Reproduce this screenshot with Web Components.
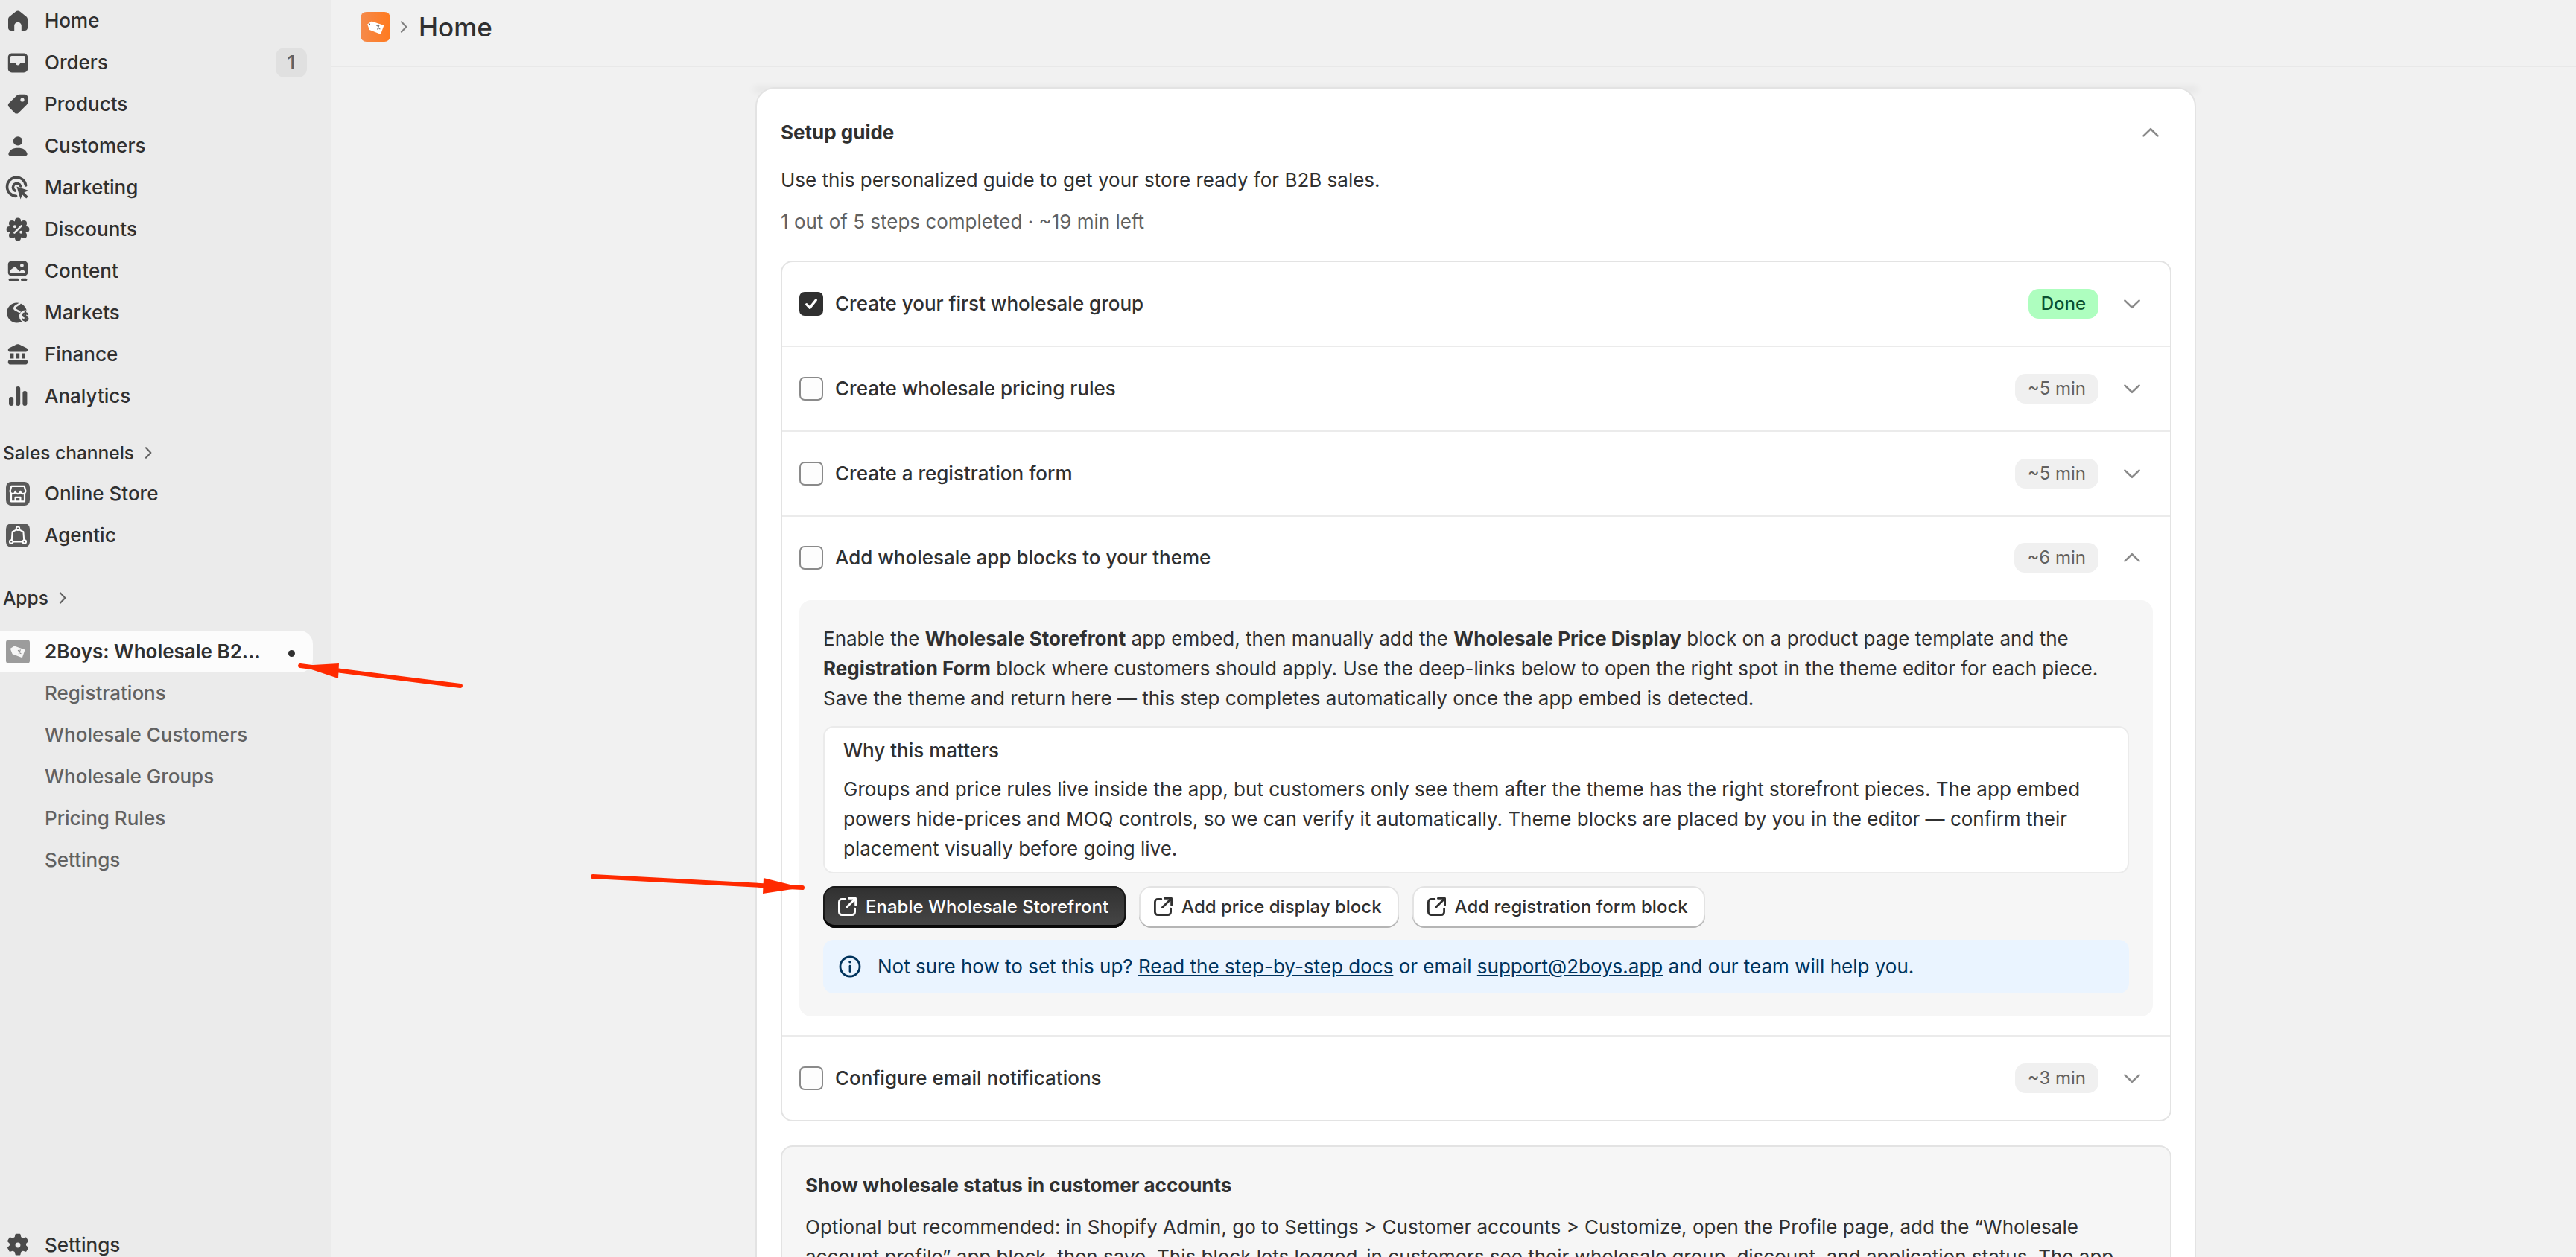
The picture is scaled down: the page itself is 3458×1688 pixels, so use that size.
<!DOCTYPE html>
<html lang="en">
<head>
<meta charset="utf-8">
<title>Home</title>
<style>
    html, body {
        margin: 0;
        height: 100%;
        overflow: hidden;
        background: #f1f1f1;
        font-family: Inter, "Liberation Sans", sans-serif;
        font-size: 26px;
        line-height: 40px;
        color: #303030;
    }
</style>
</head>
<body>
<admin-shell>
    <nav-sidebar slot="nav"></nav-sidebar>
    <top-bar slot="top">Home</top-bar>

    <setup-card>
        <step-row done time="Done">Create your first wholesale group</step-row>
        <step-row time="~5 min">Create wholesale pricing rules</step-row>
        <step-row time="~5 min">Create a registration form</step-row>
        <step-row time="~6 min" open>
            Add wholesale app blocks to your theme
            <theme-steps slot="body"></theme-steps>
        </step-row>
        <step-row time="~3 min">Configure email notifications</step-row>
    </setup-card>

    <red-arrow slot="over" tail="618,921" tip="403,894" wing-a="455,891" wing-b="454,911"></red-arrow>
    <red-arrow slot="over" tail="796,1177" tip="1077,1192" wing-a="1025,1179" wing-b="1024,1200"></red-arrow>
</admin-shell>

<script>
(function () {
    const ICONS = {
        home: '<path d="M10 3.2c-.5 0-1 .2-1.4.5L4.4 7.1c-.6.5-.9 1.2-.9 1.9v5.6c0 1 .8 1.9 1.9 1.9h2.2v-3.2c0-1.3 1.1-2.4 2.4-2.4s2.4 1.1 2.4 2.4v3.2h2.2c1.1 0 1.9-.9 1.9-1.9V9c0-.7-.3-1.4-.9-1.9l-4.2-3.4c-.4-.3-.9-.5-1.4-.5z"/>',
        orders: '<path fill-rule="evenodd" d="M6 3.8h8c1.4 0 2.5 1.1 2.6 2.5v7.8c0 1.4-1.2 2.6-2.6 2.6H6c-1.4 0-2.6-1.2-2.6-2.6V6.300c.1-1.400 1.200-2.500 2.600-2.500zM5.800 5.500c-.5 0-.8.4-.8.8v3.700h2.600c.5 0 .9.300 1 .7.300.6.800 1 1.400 1s1.100-.4 1.400-1c.1-.4.500-.7 1-.7H15V6.300c0-.4-.3-.8-.8-.8H5.800z"/>',
        tag: '<path fill-rule="evenodd" d="M11.300 3.400h3.400c1 0 1.900.9 1.900 1.900v3.500c0 .5-.2 1-.6 1.400l-5.500 5.500c-.8.8-2 .8-2.700 0l-3.800-3.800c-.8-.8-.8-2 0-2.700l5.500-5.300c.5-.3 1.200-.5 1.800-.5zM13 8.300a1.300 1.300 0 1 0 0-2.600 1.300 1.300 0 0 0 0 2.600z"/>',
        person: '<circle cx="10" cy="6.700" r="3.100"/><path d="M10 11.300c-3.400 0-5.800 1.800-6.300 4-.2.700.4 1.300 1.100 1.300h10.400c.7 0 1.300-.6 1.100-1.300-.5-2.200-2.900-4-6.300-4z"/>',
        marketing: '<path fill="none" stroke="currentColor" stroke-width="1.800" stroke-linecap="round" d="M8.800 15.700a6.300 6.300 0 1 1 6.500-7.200"/><path fill="none" stroke="currentColor" stroke-width="1.800" stroke-linecap="round" d="M8 12a2.600 2.600 0 1 1 3.800-3"/><path d="M9.200 9.300l8 2.700-3 1.300 2.700 2.700-1.300 1.300-2.700-2.700-1.100 3.100z"/>',
        discount: '<circle cx="10" cy="10" r="5.800"/><circle cx="10" cy="4.300" r="2"/><circle cx="10" cy="15.700" r="2"/><circle cx="4.300" cy="10" r="2"/><circle cx="15.700" cy="10" r="2"/><circle cx="6" cy="6" r="2"/><circle cx="14" cy="6" r="2"/><circle cx="6" cy="14" r="2"/><circle cx="14" cy="14" r="2"/><path stroke="#ebebeb" stroke-width="1.300" stroke-linecap="round" d="M7.700 12.300l4.600-4.600"/><circle cx="7.900" cy="8.100" r="1" fill="#ebebeb"/><circle cx="12.100" cy="11.900" r="1" fill="#ebebeb"/>',
        content: '<path fill-rule="evenodd" d="M5.500 3.400h9c1.200 0 2.100.9 2.100 2.100v5.500c0 1.200-.9 2.100-2.100 2.100h-9c-1.200 0-2.100-.9-2.100-2.100V5.500c0-1.200.9-2.100 2.100-2.100zM5 9.200v1.800c0 .3.200.5.500.5h9c.3 0 .5-.2.500-.5v-.5l-1.300-1.200c-.4-.3-.9-.3-1.300 0l-1.200.9-2.600-2.700c-.4-.3-.9-.3-1.300 0L5 9.200zM12.700 7.400a1.200 1.200 0 1 0 0-2.400 1.200 1.200 0 0 0 0 2.400z"/><rect x="3.800" y="14.900" width="7" height="1.700" rx=".8"/><rect x="12" y="14.900" width="4.200" height="1.700" rx=".8"/>',
        markets: '<circle cx="9.300" cy="10" r="6.700"/><path fill="none" stroke="#ebebeb" stroke-width="1.400" d="M11.500 3.200c-.8 2-3.400 1.700-3.800 3.500-.3 1.700 2.800 1.400 3.800 3.200"/><circle cx="15" cy="12.400" r="4.100" fill="#ebebeb"/><path fill="none" stroke="currentColor" stroke-width="1.300" stroke-linecap="round" d="M16.500 10.900c-.6-.8-3-.9-3 .6 0 1.500 3.100 1 3.100 2.500 0 1.500-2.500 1.400-3.300.5M15 9.500v6.300"/>',
        finance: '<path fill-rule="evenodd" d="M10 3.100c.3 0 .6.100.9.200l4.800 2.300c.6.300.9.800.9 1.400 0 .7-.5 1.200-1.200 1.200H4.600c-.7 0-1.200-.5-1.200-1.200 0-.6.300-1.100.9-1.400l4.800-2.300c.3-.1.600-.2.900-.2zM5 9.300h2.200v3.400H5zM8.900 9.300h2.200v3.400H8.900zM12.800 9.300H15v3.400h-2.200z"/><path d="M4.700 13.600h10.600c.7 0 1.300.6 1.300 1.300v.5c0 .7-.6 1.300-1.300 1.300H4.700c-.7 0-1.300-.6-1.300-1.300v-.5c0-.7.6-1.300 1.300-1.300z"/>',
        analytics: '<rect x="4" y="10.500" width="3.100" height="6" rx="1.500"/><rect x="8.600" y="3.500" width="3" height="13" rx="1.500"/><rect x="13.200" y="6.500" width="3" height="10" rx="1.500"/>',
        store: '<rect x="2" y="2" width="16" height="16" rx="3.600" fill="#5a5a5a"/><g fill="none" stroke="#fff" stroke-width="1.100" stroke-linejoin="round"><path d="M4.800 8.200 5.700 4.900h8.600l.9 3.300a1.700 1.700 0 0 1-3.500.2 1.700 1.700 0 0 1-3.400 0 1.700 1.700 0 0 1-3.500-.2z"/><path d="M5.500 10.200v5h9v-5"/><path d="M8.300 15.200v-2.800h3.400v2.800"/></g>',
        agentic: '<rect x="2" y="2" width="16" height="16" rx="3.600" fill="#5a5a5a"/><g fill="none" stroke="#fff" stroke-width="1" stroke-linejoin="round"><circle cx="10" cy="5.400" r="1.100"/><circle cx="5.600" cy="14.200" r="1.100"/><circle cx="14.400" cy="14.200" r="1.100"/><path d="M8.900 6.300 6.300 7.600l-.4 5.500M11.100 6.300l2.600 1.300.4 5.500M6.700 14.200h6.600"/></g>',
        settings: '<path fill-rule="evenodd" d="M8.700 2.800h2.600l.5 2 1.500.9 2-.6 1.300 2.200-1.500 1.500v1.500l1.500 1.500-1.300 2.200-2-.6-1.500.9-.5 2H8.700l-.5-2-1.500-.9-2 .6-1.300-2.200 1.500-1.500V8.800L3.400 7.300l1.300-2.200 2 .6 1.500-.9.500-2zM10 12.100a2.100 2.100 0 1 0 0-4.200 2.100 2.100 0 0 0 0 4.200z" stroke="currentColor" stroke-width=".8" stroke-linejoin="round"/>',
        app: '<rect x="2" y="2" width="16" height="16" rx="2" fill="#9c9c9c"/><path fill="#f6f6f6" d="M4.900 8 7.600 6.300l7.200 2.500-1.900 5.300-6.600-2.500z"/><path stroke="#8a8a8a" stroke-width=".6" fill="none" d="M11.700 8.700l-1.100 3M10 9.200l.8.400M11.400 11l.8.400"/>',
        external: '<path fill="none" stroke="currentColor" stroke-width="1.400" stroke-linecap="round" stroke-linejoin="round" d="M8.900 4.700H6.600c-1 0-1.900.8-1.900 1.900v6.800c0 1 .9 1.900 1.900 1.900h6.800c1 0 1.900-.9 1.900-1.900v-2.300M11.200 4.200h4.600v4.600M15.500 4.500l-5.800 5.800"/>',
        info: '<circle cx="10" cy="10" r="6.500" fill="none" stroke="currentColor" stroke-width="1.400"/><circle cx="10" cy="6.900" r=".9"/><path stroke="currentColor" stroke-width="1.400" stroke-linecap="round" d="M10 9.600v3.700"/>',
        down: '<path fill="none" stroke="currentColor" stroke-width="1.300" stroke-linecap="round" stroke-linejoin="round" d="M5.200 7.800 10 12.400l4.800-4.600"/>',
        up: '<path fill="none" stroke="currentColor" stroke-width="1.300" stroke-linecap="round" stroke-linejoin="round" d="M5.200 12.200 10 7.600l4.800 4.600"/>',
        right: '<path fill="none" stroke="currentColor" stroke-width="1.500" stroke-linecap="round" stroke-linejoin="round" d="M7.800 5.200 12.400 10l-4.600 4.800"/>'
    };

    class UiIcon extends HTMLElement {
        connectedCallback() {
            const size = this.getAttribute('size') || '40';
            this.attachShadow({ mode: 'open' }).innerHTML = `
                <style>
                    :host { display: inline-flex; flex: none; width: ${size}px; height: ${size}px; }
                    svg { display: block; width: 100%; height: 100%; fill: currentColor; }
                </style>
                <svg viewBox="0 0 20 20" aria-hidden="true">${ICONS[this.getAttribute('name')] || ''}</svg>`;
        }
    }

    class AdminShell extends HTMLElement {
        constructor() {
            super();
            this.attachShadow({ mode: 'open' }).innerHTML = `
                <style>
                    :host {
                        display: grid;
                        grid-template-columns: 444px 1fr;
                        position: relative;
                        width: 3458px;
                        height: 1688px;
                        overflow: hidden;
                    }
                    .main { display: flex; flex-direction: column; min-width: 0; }
                    .page { padding: 27px 0 0 570px; }
                    .page-inner { width: 1934px; }
                    .prior {
                        height: 0;
                        margin-top: -27px;
                        margin-bottom: 27px;
                        box-shadow: 0 3px 10px 2px rgba(0, 0, 0, 0.1);
                    }
                    .over { position: absolute; inset: 0; pointer-events: none; }
                </style>
                <slot name="nav"></slot>
                <div class="main">
                    <slot name="top"></slot>
                    <div class="page">
                        <div class="page-inner">
                            <div class="prior"></div>
                            <slot></slot>
                        </div>
                    </div>
                </div>
                <div class="over"><slot name="over"></slot></div>`;
        }
    }

    class NavItem extends HTMLElement {
        connectedCallback() {
            const icon = this.getAttribute('icon');
            const badge = this.getAttribute('badge');
            const dot = this.hasAttribute('dot');
            this.attachShadow({ mode: 'open' }).innerHTML = `
                <style>
                    :host {
                        display: flex;
                        align-items: center;
                        height: 56px;
                        padding-left: 4px;
                        font-weight: 500;
                        color: #303030;
                        white-space: nowrap;
                    }
                    :host([sub]) { padding-left: 60px; font-weight: 450; color: #616161; }
                    :host([active]) {
                        width: 420px;
                        box-sizing: border-box;
                        background: #fcfcfc;
                        border-radius: 0 18px 18px 0;
                        font-weight: 600;
                    }
                    ui-icon { margin-right: 16px; color: #4a4a4a; }
                    .badge {
                        margin-left: auto;
                        margin-right: 32px;
                        width: 42px;
                        height: 40px;
                        border-radius: 12px;
                        background: #e0e0e0;
                        color: #616161;
                        text-align: center;
                    }
                    .dot {
                        width: 9px;
                        height: 9px;
                        margin: 4px 24px 0 auto;
                        border-radius: 50%;
                        background: #303030;
                    }
                </style>
                ${icon ? `<ui-icon name="${icon}"></ui-icon>` : ''}
                <slot></slot>
                ${badge ? `<span class="badge">${badge}</span>` : ''}
                ${dot ? '<span class="dot"></span>' : ''}`;
        }
    }

    class NavHeading extends HTMLElement {
        connectedCallback() {
            this.attachShadow({ mode: 'open' }).innerHTML = `
                <style>
                    :host {
                        display: flex;
                        align-items: center;
                        height: 56px;
                        padding-left: 4px;
                        font-size: 24.500px;
                        font-weight: 500;
                    }
                    ui-icon { margin-left: 5px; color: #616161; }
                </style>
                <slot></slot>
                <ui-icon name="right" size="28"></ui-icon>`;
        }
    }

    class NavSidebar extends HTMLElement {
        connectedCallback() {
            this.attachShadow({ mode: 'open' }).innerHTML = `
                <style>
                    :host {
                        display: flex;
                        flex-direction: column;
                        height: 1700px;
                        background: #ebebeb;
                    }
                    .channels { margin-top: 20px; margin-bottom: -1px; }
                    .apps { margin-top: 28px; }
                    .app { margin-top: 16px; }
                    .bottom { margin-top: auto; }
                </style>
                <nav-item icon="home">Home</nav-item>
                <nav-item icon="orders" badge="1">Orders</nav-item>
                <nav-item icon="tag">Products</nav-item>
                <nav-item icon="person">Customers</nav-item>
                <nav-item icon="marketing">Marketing</nav-item>
                <nav-item icon="discount">Discounts</nav-item>
                <nav-item icon="content">Content</nav-item>
                <nav-item icon="markets">Markets</nav-item>
                <nav-item icon="finance">Finance</nav-item>
                <nav-item icon="analytics">Analytics</nav-item>
                <nav-heading class="channels">Sales channels</nav-heading>
                <nav-item icon="store">Online Store</nav-item>
                <nav-item icon="agentic">Agentic</nav-item>
                <nav-heading class="apps">Apps</nav-heading>
                <nav-item class="app" icon="app" active dot>2Boys: Wholesale B2...</nav-item>
                <nav-item sub>Registrations</nav-item>
                <nav-item sub>Wholesale Customers</nav-item>
                <nav-item sub>Wholesale Groups</nav-item>
                <nav-item sub>Pricing Rules</nav-item>
                <nav-item sub>Settings</nav-item>
                <nav-item class="bottom" icon="settings">Settings</nav-item>`;
        }
    }

    class TopBar extends HTMLElement {
        connectedCallback() {
            this.attachShadow({ mode: 'open' }).innerHTML = `
                <style>
                    :host {
                        display: flex;
                        align-items: center;
                        position: relative;
                        z-index: 1;
                        height: 90px;
                        box-sizing: border-box;
                        padding: 0 0 16px 40px;
                        background: #f1f1f1;
                        border-bottom: 2px solid #e8e8e8;
                    }
                    .logo {
                        width: 40px;
                        height: 40px;
                        border-radius: 8px;
                        background: linear-gradient(90deg, #f58a4b, #ff7a1f);
                    }
                    .logo svg { display: block; width: 40px; height: 40px; }
                    .sep { margin: 0 6px 0 4px; color: #808080; }
                    .title { font-size: 35px; font-weight: 550; color: #303030; }
                </style>
                <span class="logo">
                    <svg viewBox="0 0 20 20">
                        <path fill="#fff" d="M4.600 8.300 7.500 6.200l8.200 2.800-2.200 6-7.500-3z"/>
                        <circle cx="6" cy="8.300" r=".5" fill="#555"/>
                        <path fill="none" stroke="#777" stroke-width=".6" d="M12.600 8.500l-1.300 3.300M10.700 9.100l.9.400M12.300 11.100l.9.400"/>
                    </svg>
                </span>
                <ui-icon class="sep" name="right" size="28"></ui-icon>
                <span class="title"><slot></slot></span>`;
        }
    }

    class SetupCard extends HTMLElement {
        connectedCallback() {
            this.attachShadow({ mode: 'open' }).innerHTML = `
                <style>
                    :host {
                        display: block;
                        background: #fff;
                        border: 2px solid #e3e3e3;
                        border-radius: 26px;
                        padding: 39px 31px 32px 32px;
                    }
                    .head { display: flex; justify-content: space-between; align-items: center; }
                    h2 { margin: 0; font: inherit; font-weight: 650; }
                    ui-icon { margin-right: 8px; color: #8a8a8a; }
                    p { margin: 0; }
                    .lead { margin-top: 24px; }
                    .progress { margin-top: 16px; color: #616161; }
                    .steps {
                        margin-top: 32px;
                        border: 2px solid #e3e3e3;
                        border-radius: 16px;
                    }
                    .profile {
                        margin-top: 32px;
                        padding: 32px 32px 32px 31px;
                        background: #f6f6f6;
                        border: 2px solid #e3e3e3;
                        border-radius: 16px;
                    }
                    h3 { margin: 0 0 16px; font: inherit; font-weight: 650; }
                </style>
                <div class="head">
                    <h2>Setup guide</h2>
                    <ui-icon name="up"></ui-icon>
                </div>
                <p class="lead">Use this personalized guide to get your store ready for B2B sales.</p>
                <p class="progress">1 out of 5 steps completed · ~19 min left</p>
                <div class="steps"><slot></slot></div>
                <div class="profile">
                    <h3>Show wholesale status in customer accounts</h3>
                    <p>Optional but recommended: in Shopify Admin, go to Settings &gt; Customer accounts &gt; Customize, open the Profile page, add the “Wholesale account profile” app block, then save. This block lets logged-in customers see their wholesale group, discount, and application status. The app</p>
                </div>`;
        }
    }

    class StepRow extends HTMLElement {
        connectedCallback() {
            const done = this.hasAttribute('done');
            const open = this.hasAttribute('open');
            this.attachShadow({ mode: 'open' }).innerHTML = `
                <style>
                    :host { display: block; border-bottom: 2px solid #ebebeb; }
                    :host(:last-child) { border-bottom: 0; }
                    .row {
                        display: flex;
                        align-items: center;
                        height: ${open ? 110 : 112}px;
                        padding: 0 31px 0 23px;
                    }
                    .box {
                        flex: none;
                        width: 32px;
                        height: 32px;
                        box-sizing: border-box;
                        margin-right: 16px;
                        border-radius: 7px;
                        border: 2px solid #8a8a8a;
                        background: #fdfdfd;
                    }
                    .box.done { border-color: #303030; background: #303030; }
                    .box svg { display: block; width: 28px; height: 28px; }
                    .label { flex: 1; font-weight: 450; }
                    .time {
                        height: 40px;
                        padding: 0 17px;
                        border-radius: 14px;
                        background: #f0f0f0;
                        color: #616161;
                        font-size: 24px;
                    }
                    .time.done { background: #aefebf; color: #0c5132; font-weight: 500; }
                    ui-icon { margin-left: 25px; color: #8a8a8a; }
                </style>
                <div class="row">
                    <span class="box ${done ? 'done' : ''}">
                        ${done ? '<svg viewBox="0 0 20 20"><path fill="none" stroke="#fff" stroke-width="2.400" stroke-linecap="round" stroke-linejoin="round" d="M5.500 10.500l3.200 3.300 5.800-7.400"/></svg>' : ''}
                    </span>
                    <span class="label"><slot></slot></span>
                    <span class="time ${done ? 'done' : ''}">${this.getAttribute('time')}</span>
                    <ui-icon name="${open ? 'up' : 'down'}"></ui-icon>
                </div>
                <slot name="body"></slot>`;
        }
    }

    class LinkButton extends HTMLElement {
        connectedCallback() {
            this.attachShadow({ mode: 'open' }).innerHTML = `
                <style>
                    :host {
                        display: inline-flex;
                        align-items: center;
                        gap: 5px;
                        height: 56px;
                        box-sizing: border-box;
                        padding: 0 23px 0 12px;
                        border-radius: 16px;
                        background: #fff;
                        color: #303030;
                        font-size: 24px;
                        font-weight: 500;
                        box-shadow: inset 0 -2px 0 #b5b5b5, inset 0 0 0 2px #e3e3e3;
                        white-space: nowrap;
                    }
                    :host([primary]) {
                        background: linear-gradient(#303030, #474747);
                        color: #fff;
                        box-shadow: inset 0 -4px 0 #0a0a0a, inset 0 0 0 2px #1a1a1a;
                    }
                </style>
                <ui-icon name="external"></ui-icon>
                <slot></slot>`;
        }
    }

    class ThemeSteps extends HTMLElement {
        connectedCallback() {
            this.attachShadow({ mode: 'open' }).innerHTML = `
                <style>
                    :host {
                        display: block;
                        margin: 2px 23px 25px;
                        padding: 32px 32px 31px 32px;
                        background: #f6f6f6;
                        border-radius: 16px;
                    }
                    p { margin: 0; }
                    b { font-weight: 650; }
                    .why {
                        margin-top: 17px;
                        padding: 11px 25px;
                        background: #fff;
                        border: 2px solid #ebebeb;
                        border-radius: 14px;
                    }
                    h4 { margin: 0 0 12px; font: inherit; font-weight: 550; }
                    .actions { display: flex; gap: 18px; margin-top: 17px; }
                    .note {
                        display: flex;
                        align-items: center;
                        gap: 17px;
                        height: 72px;
                        margin-top: 16px;
                        padding-left: 16px;
                        border-radius: 14px;
                        background: #eaf4ff;
                        color: #00335c;
                    }
                    .note a { color: inherit; text-decoration: underline; }
                </style>
                <p>Enable the <b>Wholesale Storefront</b> app embed, then manually add the <b>Wholesale Price Display</b> block on a product page template and the <b>Registration Form</b> block where customers should apply. Use the deep-links below to open the right spot in the theme editor for each piece. Save the theme and return here — this step completes automatically once the app embed is detected.</p>
                <div class="why">
                    <h4>Why this matters</h4>
                    <p>Groups and price rules live inside the app, but customers only see them after the theme has the right storefront pieces. The app embed powers hide-prices and MOQ controls, so we can verify it automatically. Theme blocks are placed by you in the editor — confirm their placement visually before going live.</p>
                </div>
                <div class="actions">
                    <link-button primary>Enable Wholesale Storefront</link-button>
                    <link-button>Add price display block</link-button>
                    <link-button>Add registration form block</link-button>
                </div>
                <div class="note">
                    <ui-icon name="info"></ui-icon>
                    <span>Not sure how to set this up? <a>Read the step-by-step docs</a> or email <a>support@2boys.app</a> and our team will help you.</span>
                </div>`;
        }
    }

    // annotation arrows are drawn on the screenshot itself, so they sit on a free canvas
    class RedArrow extends HTMLElement {
        connectedCallback() {
            const point = (name) => this.getAttribute(name).replace(',', ' ');
            this.attachShadow({ mode: 'open' }).innerHTML = `
                <style>
                    :host { display: block; position: absolute; inset: 0; }
                    svg { display: block; width: 3458px; height: 1688px; }
                </style>
                <svg viewBox="0 0 3458 1688">
                    <path d="M${point('tail')} L${point('tip')}" stroke="#ff2a00" stroke-width="6" stroke-linecap="round"/>
                    <path d="M${point('tip')} L${point('wing-a')} L${point('wing-b')} Z" fill="#ff2a00"/>
                </svg>`;
        }
    }

    customElements.define('ui-icon', UiIcon);
    customElements.define('admin-shell', AdminShell);
    customElements.define('nav-item', NavItem);
    customElements.define('nav-heading', NavHeading);
    customElements.define('nav-sidebar', NavSidebar);
    customElements.define('top-bar', TopBar);
    customElements.define('setup-card', SetupCard);
    customElements.define('step-row', StepRow);
    customElements.define('link-button', LinkButton);
    customElements.define('theme-steps', ThemeSteps);
    customElements.define('red-arrow', RedArrow);
}());
</script>
</body>
</html>
